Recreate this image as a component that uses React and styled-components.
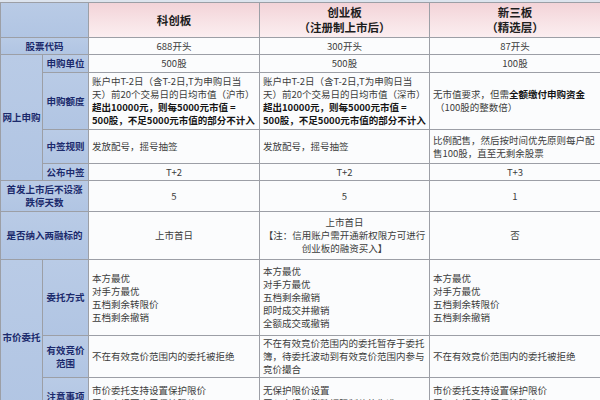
import React from "react";
import styled, { createGlobalStyle } from "styled-components";

const GlobalStyle = createGlobalStyle`
    html, body {
        margin: 0;
        padding: 0;
        background: #dde4ee;
        overflow: hidden;
    }
    body {
        font-family: "Noto Sans CJK SC", "Noto Sans", "Liberation Sans", sans-serif;
    }
`;

const Page = styled.div`
    width: 600px;
    height: 400px;
    padding-top: 2px;
    box-sizing: border-box;
    overflow: hidden;
`;

const Grid = styled.div`
    display: grid;
    grid-template-columns: 41px 45px 170px 169px 170px;
    grid-template-rows: 34px 16px 17px 56px 33px 16px 30px 47px 75px 41px 36px;
    gap: 1px;
    padding: 1px 0 1px 1px;
    background: #9c9fa6;
    width: 600px;
    box-sizing: border-box;
`;

const Cell = styled.div`
    grid-column: ${(p) => p.$col} / span ${(p) => p.$colSpan || 1};
    grid-row: ${(p) => p.$row} / span ${(p) => p.$rowSpan || 1};
    display: flex;
    flex-direction: column;
    justify-content: center;
    box-sizing: border-box;
    overflow: hidden;
`;

const LabelCell = styled(Cell)`
    background: linear-gradient(180deg, #b9cbe6 0%, #b1c5e3 100%);
    color: #1b2a6c;
    font-weight: 700;
    font-size: 9.5px;
    line-height: 13px;
    white-space: nowrap;
    align-items: center;
    text-align: center;
    padding: 0;
`;

const HeaderCell = styled(Cell)`
    background: linear-gradient(180deg, #f3d3d8 0%, #f8e4e7 60%, #fbeef0 100%);
    color: #1d1d1d;
    font-weight: 700;
    font-size: 11.5px;
    line-height: 15px;
    align-items: center;
    text-align: center;
`;

const DataCell = styled(Cell)`
    background: #fbfcfd;
    color: #3c3c3c;
    font-size: 9.5px;
    line-height: 13px;
    white-space: nowrap;
    align-items: ${(p) => (p.$left ? "flex-start" : "center")};
    justify-content: ${(p) => (p.$top ? "flex-start" : "center")};
    text-align: ${(p) => (p.$left ? "left" : "center")};
    padding: ${(p) => (p.$top ? "6px 3px 0" : "0 3px")};
`;

const Line = styled.div`
    white-space: nowrap;
`;

const Strong = styled.span`
    font-weight: 700;
    color: #151515;
`;

const Indent = styled.div`
    padding-left: 2px;
`;

const lines = (arr) => arr.map((t, i) => <Line key={i}>{t}</Line>);

export default function App() {
    return (
        <Page>
            <GlobalStyle />
            <Grid>
                <LabelCell $col={1} $colSpan={2} $row={1} />
                <HeaderCell $col={3} $row={1}>科创板</HeaderCell>
                <HeaderCell $col={4} $row={1}>
                    {lines(["创业板", "（注册制上市后）"])}
                </HeaderCell>
                <HeaderCell $col={5} $row={1}>
                    {lines(["新三板", "（精选层）"])}
                </HeaderCell>

                <LabelCell $col={1} $colSpan={2} $row={2}>股票代码</LabelCell>
                <DataCell $col={3} $row={2}>688开头</DataCell>
                <DataCell $col={4} $row={2}>300开头</DataCell>
                <DataCell $col={5} $row={2}>87开头</DataCell>

                <LabelCell $col={1} $row={3} $rowSpan={4}>网上申购</LabelCell>
                <LabelCell $col={2} $row={3}>申购单位</LabelCell>
                <DataCell $col={3} $row={3}>500股</DataCell>
                <DataCell $col={4} $row={3}>500股</DataCell>
                <DataCell $col={5} $row={3}>100股</DataCell>

                <LabelCell $col={2} $row={4}>申购额度</LabelCell>
                <DataCell $col={3} $row={4} $left>
                    <Line>账户中T-2日（含T-2日,T为申购日当</Line>
                    <Line>天）前20个交易日的日均市值（沪市）</Line>
                    <Line><Strong>超出10000元，则每5000元市值 =</Strong></Line>
                    <Line><Strong>500股，不足5000元市值的部分不计入</Strong></Line>
                </DataCell>
                <DataCell $col={4} $row={4} $left>
                    <Line>账户中T-2日（含T-2日,T为申购日当</Line>
                    <Line>天）前20个交易日的日均市值（深市）</Line>
                    <Line><Strong>超出10000元，则每5000元市值 =</Strong></Line>
                    <Line><Strong>500股，不足5000元市值的部分不计入</Strong></Line>
                </DataCell>
                <DataCell $col={5} $row={4} $left>
                    <Line>无市值要求，但需<Strong>全额缴付申购资金</Strong></Line>
                    <Indent>（100股的整数倍）</Indent>
                </DataCell>

                <LabelCell $col={2} $row={5}>中签规则</LabelCell>
                <DataCell $col={3} $row={5} $left>发放配号，摇号抽签</DataCell>
                <DataCell $col={4} $row={5} $left>发放配号，摇号抽签</DataCell>
                <DataCell $col={5} $row={5} $left>
                    {lines(["比例配售，然后按时间优先原则每户配", "售100股，直至无剩余股票"])}
                </DataCell>

                <LabelCell $col={2} $row={6}>公布中签</LabelCell>
                <DataCell $col={3} $row={6}>T+2</DataCell>
                <DataCell $col={4} $row={6}>T+2</DataCell>
                <DataCell $col={5} $row={6}>T+3</DataCell>

                <LabelCell $col={1} $colSpan={2} $row={7}>
                    {lines(["首发上市后不设涨", "跌停天数"])}
                </LabelCell>
                <DataCell $col={3} $row={7}>5</DataCell>
                <DataCell $col={4} $row={7}>5</DataCell>
                <DataCell $col={5} $row={7}>1</DataCell>

                <LabelCell $col={1} $colSpan={2} $row={8}>是否纳入两融标的</LabelCell>
                <DataCell $col={3} $row={8}>上市首日</DataCell>
                <DataCell $col={4} $row={8}>
                    {lines(["上市首日", "【注：信用账户需开通新权限方可进行", "创业板的融资买入】"])}
                </DataCell>
                <DataCell $col={5} $row={8}>否</DataCell>

                <LabelCell $col={1} $row={9} $rowSpan={3}>市价委托</LabelCell>
                <LabelCell $col={2} $row={9}>委托方式</LabelCell>
                <DataCell $col={3} $row={9} $left>
                    {lines(["本方最优", "对手方最优", "五档剩余转限价", "五档剩余撤销"])}
                </DataCell>
                <DataCell $col={4} $row={9} $left>
                    {lines(["本方最优", "对手方最优", "五档剩余撤销", "即时成交并撤销", "全额成交或撤销"])}
                </DataCell>
                <DataCell $col={5} $row={9} $left>
                    {lines(["本方最优", "对手方最优", "五档剩余转限价", "五档剩余撤销"])}
                </DataCell>

                <LabelCell $col={2} $row={10}>{lines(["有效竞价", "范围"])}</LabelCell>
                <DataCell $col={3} $row={10} $left>不在有效竞价范围内的委托被拒绝</DataCell>
                <DataCell $col={4} $row={10} $left>
                    {lines(["不在有效竞价范围内的委托暂存于委托", "簿，待委托波动到有效竞价范围内参与", "竞价撮合"])}
                </DataCell>
                <DataCell $col={5} $row={10} $left>不在有效竞价范围内的委托被拒绝</DataCell>

                <LabelCell $col={2} $row={11}>注意事项</LabelCell>
                <DataCell $col={3} $row={11} $left $top>
                    {lines(["市价委托支持设置保护限价", "买入申报不高于保护限价"])}
                </DataCell>
                <DataCell $col={4} $row={11} $left $top>
                    {lines(["无保护限价设置", "买入申报以涨跌幅限制价格为准"])}
                </DataCell>
                <DataCell $col={5} $row={11} $left $top>
                    {lines(["市价委托支持设置保护限价", "买入申报不高于保护限价"])}
                </DataCell>
            </Grid>
        </Page>
    );
}
